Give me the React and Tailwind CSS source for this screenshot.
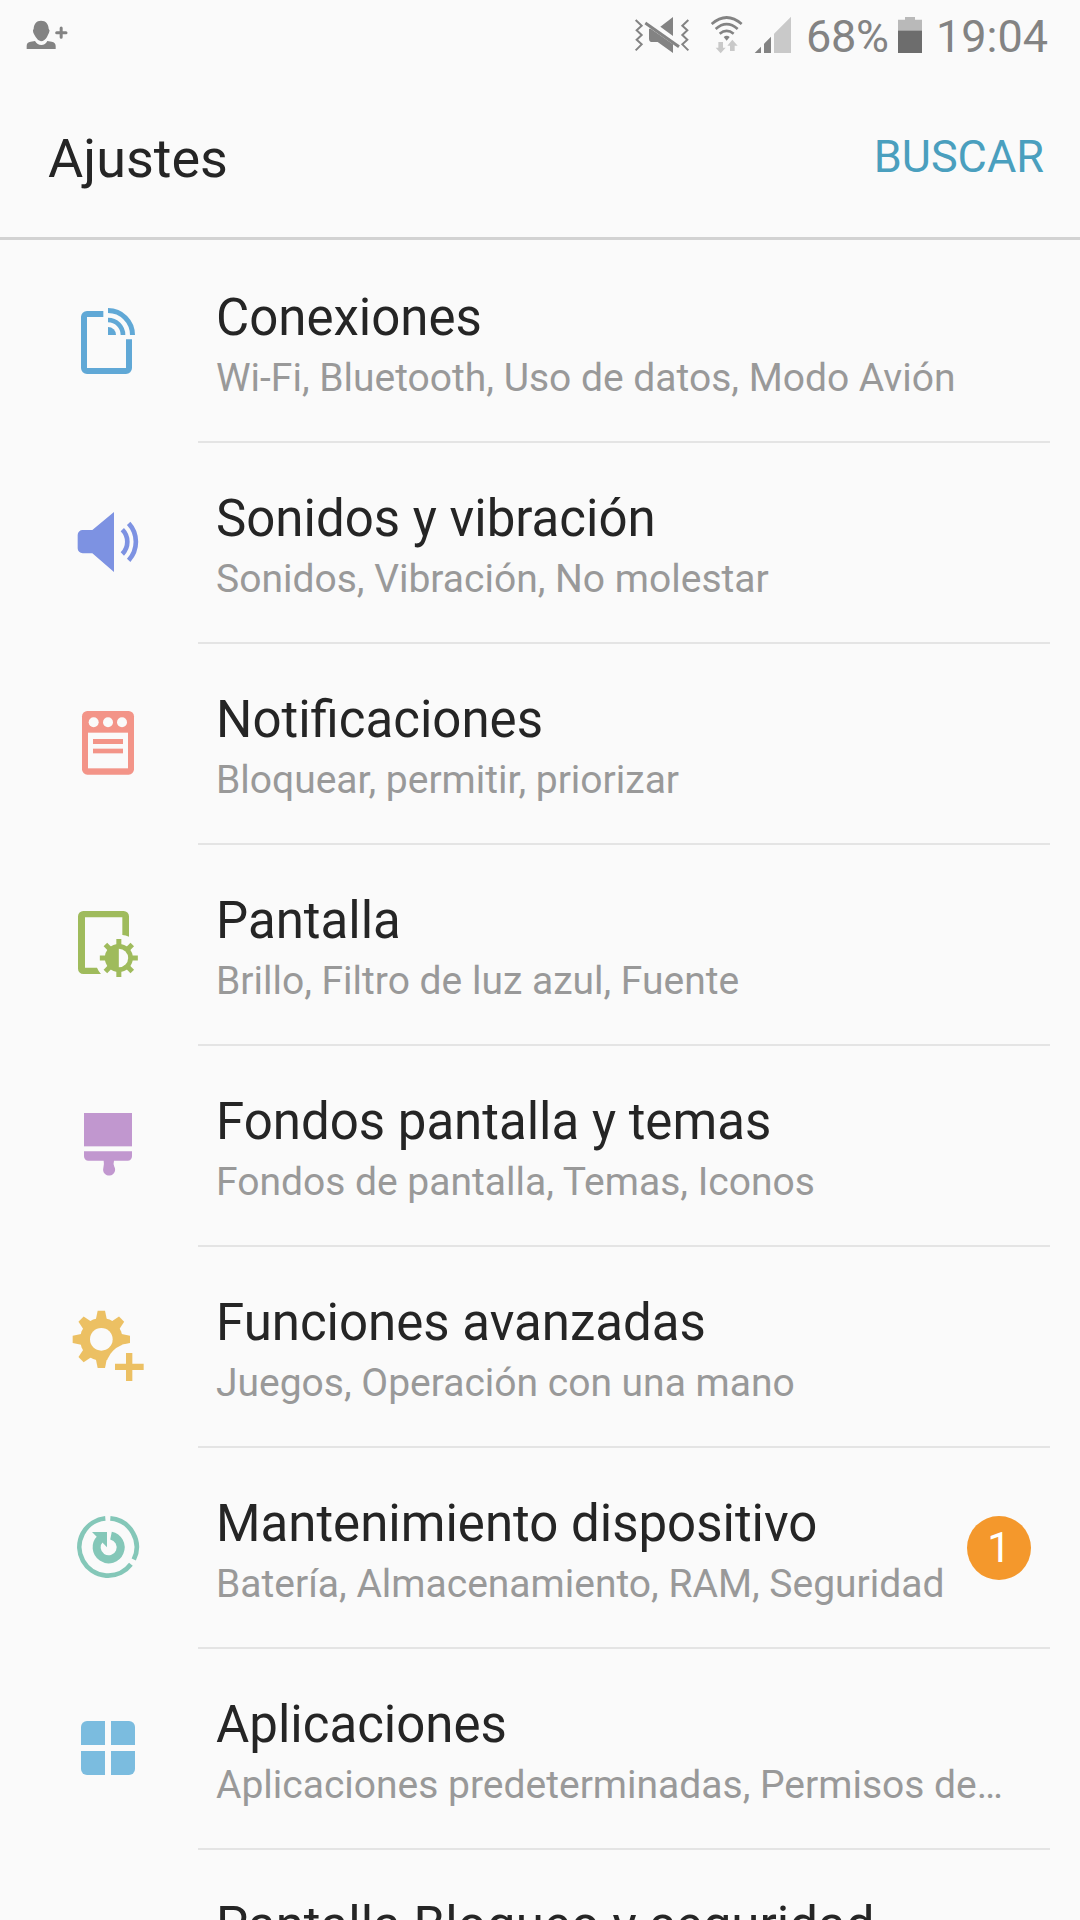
const GEAR_ANGLES = [0, 45, 90, 135, 180, 225, 270, 315]

function ConnectionsIcon() {
  return (
    <svg viewBox="24 36 240 240" className="w-20 h-20" fill="none" stroke="#60a8d6">
      <path d="M130 72H81a9 9 0 0 0-9 9V234a9 9 0 0 0 9 9H198a9 9 0 0 0 9-9V148" strokeWidth="18" />
      <path d="M144 61.5A73.5 73.5 0 0 1 217.5 135" strokeWidth="15" />
      <path d="M144 90A45 45 0 0 1 189 135" strokeWidth="14" />
      <path d="M144 111A24 24 0 0 1 168 135H144Z" fill="#60a8d6" stroke="none" />
    </svg>
  )
}

function SoundIcon() {
  return (
    <svg viewBox="24 39 240 240" className="w-20 h-20" fill="none" stroke="#7d92e2" strokeWidth="14">
      <path d="M68 120H97L162 66V246L97 190H68a15 15 0 0 1-15-15V135a15 15 0 0 1 15-15Z" fill="#7d92e2" stroke="none" />
      <path d="M187 119A52 52 0 0 1 187 192" />
      <path d="M206 100A82 82 0 0 1 206 211" />
    </svg>
  )
}

function NotificationsIcon() {
  return (
    <svg viewBox="24 27 240 240" className="w-20 h-20" fill="#f39488">
      <rect x="66" y="48" width="156" height="191" rx="16" />
      <g fill="#fafafa">
        <circle cx="101" cy="82" r="15" />
        <circle cx="144" cy="82" r="15" />
        <circle cx="186" cy="82" r="15" />
        <rect x="84" y="113" width="120" height="107" />
      </g>
      <rect x="99" y="132" width="90" height="15" />
      <rect x="99" y="161" width="90" height="14" />
    </svg>
  )
}

function DisplayIcon() {
  return (
    <svg viewBox="24 30 240 240" className="w-20 h-20" fill="#9fbb5c">
      <path d="M70 48H191a16 16 0 0 1 16 16V125Q197 121 187 120V67H75V218H111Q116 230 123 237H70a16 16 0 0 1-16-16V64a16 16 0 0 1 16-16Z" />
      {GEAR_ANGLES.map(a => (
        <rect key={a} x="169" y="132" width="15" height="24" transform={`rotate(${a} 176.5 189)`} />
      ))}
      <circle cx="176.5" cy="189" r="42" />
      <path d="M176.5 161A28 28 0 0 1 176.5 217Z" fill="#fafafa" />
    </svg>
  )
}

function ThemesIcon() {
  return (
    <svg viewBox="24 33 240 240" className="w-20 h-20" fill="#c197cf">
      <rect x="72" y="54" width="144" height="100" />
      <path d="M72 169H216V184a13 13 0 0 1-13 13H162Q159 206 163 215A18 18 0 1 1 130 219Q133 206 131 197H85a13 13 0 0 1-13-13Z" />
    </svg>
  )
}

function AdvancedIcon() {
  return (
    <svg viewBox="24 36 240 240" className="w-20 h-20" fill="#ecc063">
      <mask id="gear-cut" maskUnits="userSpaceOnUse" x="24" y="36" width="240" height="240">
        <rect x="24" y="36" width="240" height="240" fill="#fff" />
        <circle cx="124" cy="133" r="34" fill="#000" />
        <circle cx="210" cy="218" r="72" fill="#000" />
      </mask>
      <g mask="url(#gear-cut)">
        <circle cx="124" cy="133" r="64" />
        {GEAR_ANGLES.map(a => (
          <path key={a} d="M113 47H135L141 76H107Z" transform={`rotate(${a} 124 133)`} />
        ))}
      </g>
      <path d="M198 174H217V206H251V225H217V258H198V225H165V206H198Z" />
    </svg>
  )
}

function MaintenanceIcon() {
  return (
    <svg viewBox="24 24 240 240" className="w-20 h-20" fill="none" stroke="#84c7b8">
      <path d="M151 55.3A86 86 0 0 1 221.3 178.7" strokeWidth="14" />
      <path d="M212.7 192.8A86 86 0 1 1 136 55.3" strokeWidth="14" />
      <path d="M153 106.7A36 36 0 1 1 120.5 116.5" strokeWidth="24" />
      <path d="M96 96H141V142Z" fill="#84c7b8" stroke="none" />
    </svg>
  )
}

function AppsIcon() {
  return (
    <svg viewBox="24 27 240 240" className="w-20 h-20" fill="#7bbcdf">
      <path d="M63 135V81a18 18 0 0 1 18-18H135V135Z" />
      <path d="M153 63H207a18 18 0 0 1 18 18V135H153Z" />
      <path d="M63 153H135V225H81a18 18 0 0 1-18-18Z" />
      <path d="M153 153H225V207a18 18 0 0 1-18 18H153Z" />
    </svg>
  )
}

const items = [
  { icon: ConnectionsIcon, title: 'Conexiones', sub: 'Wi-Fi, Bluetooth, Uso de datos, Modo Avión' },
  { icon: SoundIcon, title: 'Sonidos y vibración', sub: 'Sonidos, Vibración, No molestar' },
  { icon: NotificationsIcon, title: 'Notificaciones', sub: 'Bloquear, permitir, priorizar' },
  { icon: DisplayIcon, title: 'Pantalla', sub: 'Brillo, Filtro de luz azul, Fuente' },
  { icon: ThemesIcon, title: 'Fondos pantalla y temas', sub: 'Fondos de pantalla, Temas, Iconos' },
  { icon: AdvancedIcon, title: 'Funciones avanzadas', sub: 'Juegos, Operación con una mano' },
  { icon: MaintenanceIcon, title: 'Mantenimiento dispositivo', sub: 'Batería, Almacenamiento, RAM, Seguridad', badge: 1 },
  { icon: AppsIcon, title: 'Aplicaciones', sub: 'Aplicaciones predeterminadas, Permisos de…' },
  { title: 'Pantalla Bloqueo y seguridad', sub: '' },
]

function StatusBar() {
  return (
    <div className="flex items-start h-20 shrink-0 text-[45px] leading-[73px] text-[#838383]">
      <svg viewBox="78 60 126 90" className="w-[42px] h-[30px] ml-[26px] mt-5" fill="#838383">
        <path d="M123 62C138 62 145 72 146 86Q151 90 147 98Q144 104 141 111Q134 123 123 124Q113 122 107 111Q103 104 100 98Q97 90 101 86C102 72 109 62 123 62Z" />
        <path d="M80 147V138Q80 126 92 125L105 123Q112 135 124 135Q136 135 142 123L155 125Q167 127 167 138V147Z" />
        <path d="M170 98H198M183.500 84V112" stroke="#838383" strokeWidth="9" strokeLinecap="round" />
      </svg>
      <svg viewBox="42 48 168 114" className="w-14 h-[38px] ml-[566px] mt-4" fill="none" stroke="#838383" strokeWidth="6">
        <path d="M47 60L65 77L50 91L65 105L50 119L65 133L47 151" />
        <path d="M205 60L187 77L202 91L187 105L202 119L187 133L205 151" />
        <path d="M159 51V108L121 80Z" fill="#838383" stroke="none" />
        <path d="M92 86L159 133V159L113 126H97Q87 126 87 116V86Z" fill="#838383" stroke="none" />
        <path d="M76 69L177 140" strokeWidth="9" />
      </svg>
      <svg viewBox="270 45 99 117" className="w-[33px] h-[39px] ml-5 mt-[15px]" fill="none" stroke="#838383" strokeWidth="8">
        <path d="M275 72Q320 33 365 72" />
        <path d="M287 87Q320 58 353 87" />
        <path d="M299 101Q320 84 341 101" />
        <path d="M311 111Q320 104 329 111L320 122Z" fill="#838383" stroke="none" />
        <path d="M295 126H309V143H317L302 160L287 143H295Z" fill="#c9c9c9" stroke="none" />
        <path d="M330 153H344V137H353L337 119L322 137H330Z" fill="#c9c9c9" stroke="none" />
      </svg>
      <svg viewBox="402 48 114 114" className="w-[38px] h-[38px] ml-[11px] mt-4" fill="#838383">
        <path d="M404 159L423 140V159Z" />
        <path d="M432 131L453 110V159H432Z" />
        <path d="M462 101L513 50V159H462Z" fill="#c9c9c9" />
      </svg>
      <span className="w-[92px] ml-3.5 whitespace-nowrap tracking-[-0.3px]">68%</span>
      <svg viewBox="834 48 72 114" className="w-6 h-[38px] mt-4" fill="#6d6d6d">
        <path d="M834 59H855V51H885V59H906V93H834Z" fill="#b9b9b9" />
        <path d="M834 92H906V159H834Z" />
      </svg>
      <span className="ml-3.5 whitespace-nowrap">19:04</span>
    </div>
  )
}

function Row({ item }) {
  const Icon = item.icon
  return (
    <div className="flex h-[201px] shrink-0 pr-[30px]">
      <div className="w-[198px] shrink-0 pt-[60px] pl-[68px]">{Icon && <Icon />}</div>
      <div className="flex flex-1 items-center justify-between border-b-2 border-[#e4e4e4] pl-[18px] pr-[19px]">
        <div className="h-full pt-[46px] whitespace-nowrap">
          <div className="text-[51px] leading-[60px] text-[#252525]">{item.title}</div>
          <div className="mt-1.5 text-[39px] leading-[48px] text-[#999999]">{item.sub}</div>
        </div>
        {item.badge && (
          <div className="flex items-center justify-center w-16 h-16 -ml-4 rounded-full bg-[#f4982c] text-[42px] leading-none text-white">
            {item.badge}
          </div>
        )}
      </div>
    </div>
  )
}

function App() {
  return (
    <div className="flex flex-col w-[1080px] h-[1920px] overflow-hidden bg-[#fafafa] font-['Roboto',sans-serif]">
      <StatusBar />
      <header className="flex items-center justify-between h-40 shrink-0 border-b-3 border-[#d2d2d2] pl-12 pr-9">
        <h1 className="text-[54px] leading-[64px] text-[#252525]">Ajustes</h1>
        <button className="pb-[3px] text-[45px] leading-[54px] text-[#4a9fbe]">BUSCAR</button>
      </header>
      <main className="flex flex-col shrink-0 pt-0.5">
        {items.map(item => <Row key={item.title} item={item} />)}
      </main>
    </div>
  )
}

export default App
